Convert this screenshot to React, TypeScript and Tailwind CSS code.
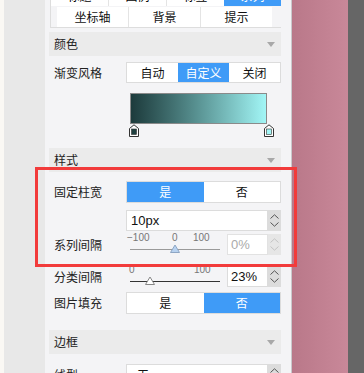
import React from 'react';

const FONT = { fontFamily: '"Noto Sans CJK SC", "Liberation Sans", sans-serif' };

function Caret() {
  return (
    <svg width="8" height="5" viewBox="0 0 8 5" className="block">
      <path d="M0 0 H8 L4 5 Z" fill="#a8a8a8" />
    </svg>
  );
}

function Header({ title }: { title: string }) {
  return (
    <div className="flex h-[24px] items-center justify-between bg-[#ebebeb] pl-[5px] pr-[6px] text-[12px] text-[#222]">
      <span>{title}</span>
      <Caret />
    </div>
  );
}

function Spinner({ disabled }: { disabled?: boolean }) {
  const c = disabled ? '#c4c4c4' : '#555';
  return (
    <div
      className={
        disabled
          ? 'flex w-[13px] flex-col items-center justify-center gap-[3px] bg-[#e6e6e6]'
          : 'flex w-[13px] flex-col items-center justify-center gap-[3px] bg-[#dcdcdc]'
      }
    >
      <svg width="9" height="5" viewBox="0 0 9 5">
        <path d="M0.5 4.5 L4.5 0.8 L8.5 4.5" fill="none" stroke={c} strokeWidth="1" />
      </svg>
      <svg width="9" height="5" viewBox="0 0 9 5">
        <path d="M0.5 0.5 L4.5 4.2 L8.5 0.5" fill="none" stroke={c} strokeWidth="1" />
      </svg>
    </div>
  );
}

function Segmented({ items, active, tall }: { items: string[]; active: number; tall?: boolean }) {
  return (
    <div
      className={
        (tall ? 'h-[22px] ' : 'h-[21px] ') + 'flex w-[155px] border border-[#dcdcdc] bg-white text-[12px]'
      }
    >
      {items.map((t, i) => (
        <div
          key={t}
          className={
            i === active
              ? 'flex flex-1 items-center justify-center bg-[#3f9bf7] text-white'
              : 'flex flex-1 items-center justify-center text-[#111]'
          }
        >
          {t}
        </div>
      ))}
    </div>
  );
}

function Row({ label, children, className }: { label: string; children: React.ReactNode; className?: string }) {
  return (
    <div className={'flex items-center pl-[5px] ' + (className ?? '')}>
      <div className="w-[72px] text-[12px] text-[#222]">{label}</div>
      {children}
    </div>
  );
}

function Slider({
  marks,
  thumb,
  disabled,
}: {
  marks: { text: string; left: number }[];
  thumb: number;
  disabled?: boolean;
}) {
  return (
    <div className="relative h-[22px] w-[100px]">
      {marks.map((m) => (
        <span
          key={m.text}
          className="absolute top-[-2px] text-[10px] leading-[12px] text-[#777]"
          style={{ left: m.left, fontFamily: '"Liberation Sans", sans-serif' }}
        >
          {m.text}
        </span>
      ))}
      <svg className="absolute left-0 top-[8px]" width="100" height="12" viewBox="0 0 100 12">
        <line x1="4" y1="7.5" x2="94" y2="7.5" stroke={disabled ? '#9a9a9a' : '#333'} strokeWidth="1" />
        <path
          d={`M${thumb - 4.5} 10.5 L${thumb} 3 L${thumb + 4.5} 10.5 Z`}
          fill={disabled ? '#b8d2f0' : '#fff'}
          stroke={disabled ? '#8ea6c4' : '#888'}
          strokeWidth="1"
        />
      </svg>
    </div>
  );
}

function NumberBox({ value, disabled }: { value: string; disabled?: boolean }) {
  return (
    <div className="ml-auto flex h-[21px] w-[54px]">
      <div
        className={
          disabled
            ? 'flex flex-1 items-center border border-[#e2e2e2] bg-white pl-[3px] text-[13px] text-[#aaa]'
            : 'flex flex-1 items-center border border-[#dcdcdc] bg-white pl-[3px] text-[13px] text-[#111]'
        }
        style={{ fontFamily: '"Liberation Sans", sans-serif' }}
      >
        {value}
      </div>
      <Spinner disabled={disabled} />
    </div>
  );
}

function GradientStop({ color }: { color: string }) {
  return (
    <svg width="10" height="13" viewBox="0 0 10 13" className="block">
      <path d="M0.5 12.5 V4.5 L5 0.8 L9.5 4.5 V12.5 Z" fill="#fff" stroke="#333" strokeWidth="1" />
      <rect x="2.5" y="5" width="5" height="5.5" fill={color} stroke="#333" strokeWidth="0.6" />
    </svg>
  );
}

export default function App() {
  return (
    <div className="relative flex h-[373px] w-[364px] overflow-hidden" style={FONT}>
      <div className="w-[4px] bg-[#faf8f4]" />
      <div className="w-[41px] bg-[#e8e8e8]" />
      <div className="w-[247px] border-r border-[#c9c9cc] bg-[#f4f4f6] pl-[4px] pr-[10px]">
        {/* tabs */}
        <div className="ml-[1px] mt-[-15px] border-b border-l border-[#dddddd]">
          <div className="flex h-[21px] text-[12px]">
            <div className="flex flex-1 items-center justify-center border-r border-[#e4e4e4] bg-white">标题</div>
            <div className="flex flex-1 items-center justify-center border-r border-[#e4e4e4] bg-white">图例</div>
            <div className="flex flex-1 items-center justify-center bg-white">标签</div>
            <div className="flex flex-1 items-center justify-center bg-[#3f9bf7] text-white">系列</div>
          </div>
          <div className="mt-[1px] flex h-[20px] pl-[6px] pr-[9px] text-[12px] text-[#111]">
            <div className="flex flex-1 items-center justify-center border-r border-[#e4e4e4] bg-white">坐标轴</div>
            <div className="flex flex-1 items-center justify-center border-r border-[#e4e4e4] bg-white">背景</div>
            <div className="flex flex-1 items-center justify-center bg-white">提示</div>
          </div>
        </div>

        <div className="mt-[4px]">
          <Header title="颜色" />
        </div>
        <Row label="渐变风格" className="mt-[6px]">
          <Segmented items={['自动', '自定义', '关闭']} active={1} />
        </Row>
        <div className="ml-[77px] mt-[10px] w-[155px] pl-[3px]">
          <div className="ml-[1px] h-[31px] w-[137px] border border-[#8a8a8a] bg-gradient-to-r from-[#1d3b3c] via-[#5a9494] to-[#a2f6f6]" />
          <div className="flex w-[145px] justify-between">
            <GradientStop color="#1f4040" />
            <GradientStop color="#a2f6f6" />
          </div>
        </div>

        <div className="mt-[11px]">
          <Header title="样式" />
        </div>
        <Row label="固定柱宽" className="mt-[9px]">
          <Segmented items={['是', '否']} active={0} tall />
        </Row>
        <div className="ml-[77px] mt-[7px] flex h-[21px] w-[155px]">
          <div
            className="flex flex-1 items-center border border-[#dcdcdc] bg-white pl-[4px] text-[13px] text-[#111]"
            style={{ fontFamily: '"Liberation Sans", sans-serif' }}
          >
            10px
          </div>
          <Spinner />
        </div>
        <Row label="系列间隔" className="mt-[3px] h-[21px]">
          <div className="flex w-[155px] items-center">
            <Slider
              disabled
              thumb={49}
              marks={[
                { text: '−100', left: 1 },
                { text: '0', left: 46 },
                { text: '100', left: 67 },
              ]}
            />
            <NumberBox value="0%" disabled />
          </div>
        </Row>
        <Row label="分类间隔" className="mt-[11px] h-[21px]">
          <div className="flex w-[155px] items-center">
            <Slider
              thumb={24}
              marks={[
                { text: '0', left: 3 },
                { text: '100', left: 68 },
              ]}
            />
            <NumberBox value="23%" />
          </div>
        </Row>
        <Row label="图片填充" className="mt-[5px]">
          <Segmented items={['是', '否']} active={1} tall />
        </Row>

        <div className="mt-[16px]">
          <Header title="边框" />
        </div>
        <Row label="线型" className="mt-[10px]">
          <div className="flex h-[21px] w-[155px]">
            <div className="flex flex-1 items-center border border-[#dcdcdc] bg-white pl-[10px] text-[12px] text-[#111]">
              无
            </div>
            <Spinner />
          </div>
        </Row>
      </div>
      <div className="w-[56px] bg-gradient-to-r from-[#b97889] to-[#c98899]" />
      <div className="flex-1 bg-[#666666]" />

      {/* highlight frame */}
      <div className="absolute left-[35px] top-[167px] h-[100px] w-[262px] border-[3px] border-[#f23b3b]" />
    </div>
  );
}
